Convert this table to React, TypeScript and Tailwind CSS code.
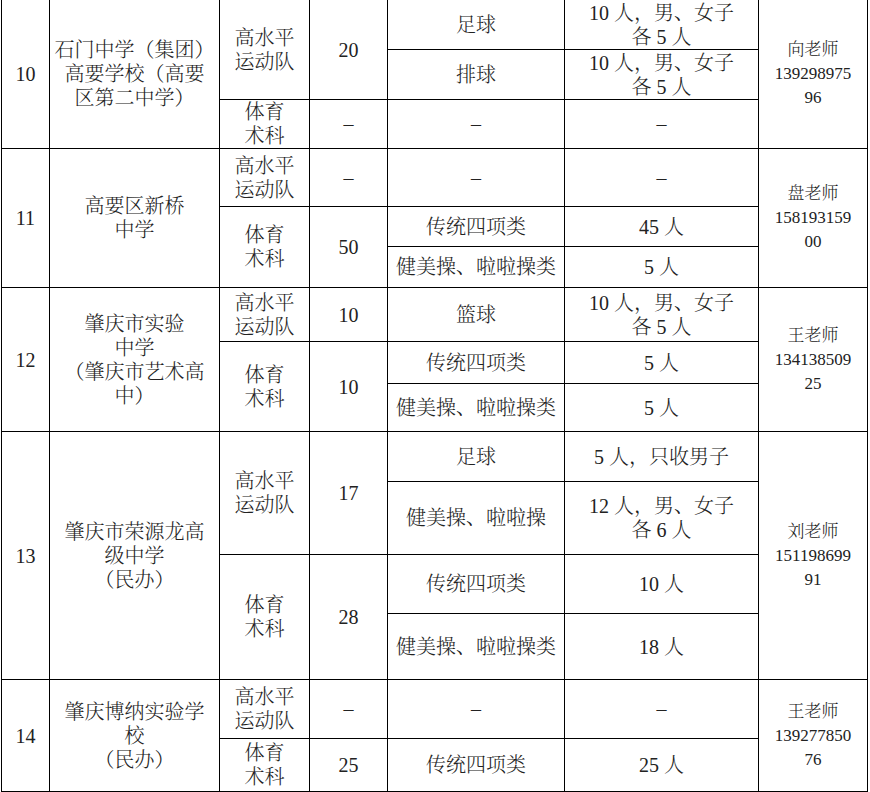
import React from "react";

const base =
  "flex items-center justify-center text-center border-r border-b border-black leading-[24px]";

function C({ cls, children, small }: { cls: string; children: React.ReactNode; small?: boolean }) {
  return <div className={`${base} ${small ? "text-[17px]" : "text-[20px]"} ${cls}`}>{children}</div>;
}

export default function App() {
  return (
    <div className="bg-white w-[870px] h-[792px] overflow-hidden">
      <div className="ml-px w-fit border-l border-black grid grid-cols-[48px_170px_90px_78px_177px_194px_109px] grid-rows-[50px_50px_49px_58px_40px_41px_54px_42px_48px_50px_73px_59px_66px_59px_53px] text-[#222222] font-light font-['Liberation_Serif','Noto_Serif_CJK_SC','Noto_Sans_CJK_SC',serif]">
        {/* Row 10 */}
        <C cls="col-start-1 row-start-1 row-span-3">10</C>
        <C cls="col-start-2 row-start-1 row-span-3">
          <div>石门中学（集团）<br />高要学校（高要<br />区第二中学）</div>
        </C>
        <C cls="col-start-3 row-start-1 row-span-2">
          <div>高水平<br />运动队</div>
        </C>
        <C cls="col-start-4 row-start-1 row-span-2">20</C>
        <C cls="col-start-5 row-start-1">足球</C>
        <C cls="col-start-6 row-start-1">
          <div>10 人，男、女子<br />各 5 人</div>
        </C>
        <C cls="col-start-5 row-start-2">排球</C>
        <C cls="col-start-6 row-start-2">
          <div>10 人，男、女子<br />各 5 人</div>
        </C>
        <C cls="col-start-3 row-start-3">
          <div>体育<br />术科</div>
        </C>
        <C cls="col-start-4 row-start-3">–</C>
        <C cls="col-start-5 row-start-3">–</C>
        <C cls="col-start-6 row-start-3">–</C>
        <C small cls="col-start-7 row-start-1 row-span-3">
          <div>向老师<br />139298975<br />96</div>
        </C>

        {/* Row 11 */}
        <C cls="col-start-1 row-start-4 row-span-3">11</C>
        <C cls="col-start-2 row-start-4 row-span-3">
          <div>高要区新桥<br />中学</div>
        </C>
        <C cls="col-start-3 row-start-4">
          <div>高水平<br />运动队</div>
        </C>
        <C cls="col-start-4 row-start-4">–</C>
        <C cls="col-start-5 row-start-4">–</C>
        <C cls="col-start-6 row-start-4">–</C>
        <C cls="col-start-3 row-start-5 row-span-2">
          <div>体育<br />术科</div>
        </C>
        <C cls="col-start-4 row-start-5 row-span-2">50</C>
        <C cls="col-start-5 row-start-5">传统四项类</C>
        <C cls="col-start-6 row-start-5">45 人</C>
        <C cls="col-start-5 row-start-6">健美操、啦啦操类</C>
        <C cls="col-start-6 row-start-6">5 人</C>
        <C small cls="col-start-7 row-start-4 row-span-3">
          <div>盘老师<br />158193159<br />00</div>
        </C>

        {/* Row 12 */}
        <C cls="col-start-1 row-start-7 row-span-3">12</C>
        <C cls="col-start-2 row-start-7 row-span-3">
          <div>肇庆市实验<br />中学<br />（肇庆市艺术高<br />中）</div>
        </C>
        <C cls="col-start-3 row-start-7">
          <div>高水平<br />运动队</div>
        </C>
        <C cls="col-start-4 row-start-7">10</C>
        <C cls="col-start-5 row-start-7">篮球</C>
        <C cls="col-start-6 row-start-7">
          <div>10 人，男、女子<br />各 5 人</div>
        </C>
        <C cls="col-start-3 row-start-8 row-span-2">
          <div>体育<br />术科</div>
        </C>
        <C cls="col-start-4 row-start-8 row-span-2">10</C>
        <C cls="col-start-5 row-start-8">传统四项类</C>
        <C cls="col-start-6 row-start-8">5 人</C>
        <C cls="col-start-5 row-start-9">健美操、啦啦操类</C>
        <C cls="col-start-6 row-start-9">5 人</C>
        <C small cls="col-start-7 row-start-7 row-span-3">
          <div>王老师<br />134138509<br />25</div>
        </C>

        {/* Row 13 */}
        <C cls="col-start-1 row-start-10 row-span-4">13</C>
        <C cls="col-start-2 row-start-10 row-span-4">
          <div>肇庆市荣源龙高<br />级中学<br />（民办）</div>
        </C>
        <C cls="col-start-3 row-start-10 row-span-2">
          <div>高水平<br />运动队</div>
        </C>
        <C cls="col-start-4 row-start-10 row-span-2">17</C>
        <C cls="col-start-5 row-start-10">足球</C>
        <C cls="col-start-6 row-start-10">5 人，只收男子</C>
        <C cls="col-start-5 row-start-11">健美操、啦啦操</C>
        <C cls="col-start-6 row-start-11">
          <div>12 人，男、女子<br />各 6 人</div>
        </C>
        <C cls="col-start-3 row-start-12 row-span-2">
          <div>体育<br />术科</div>
        </C>
        <C cls="col-start-4 row-start-12 row-span-2">28</C>
        <C cls="col-start-5 row-start-12">传统四项类</C>
        <C cls="col-start-6 row-start-12">10 人</C>
        <C cls="col-start-5 row-start-13">健美操、啦啦操类</C>
        <C cls="col-start-6 row-start-13">18 人</C>
        <C small cls="col-start-7 row-start-10 row-span-4">
          <div>刘老师<br />151198699<br />91</div>
        </C>

        {/* Row 14 */}
        <C cls="col-start-1 row-start-14 row-span-2">14</C>
        <C cls="col-start-2 row-start-14 row-span-2">
          <div>肇庆博纳实验学<br />校<br />（民办）</div>
        </C>
        <C cls="col-start-3 row-start-14">
          <div>高水平<br />运动队</div>
        </C>
        <C cls="col-start-4 row-start-14">–</C>
        <C cls="col-start-5 row-start-14">–</C>
        <C cls="col-start-6 row-start-14">–</C>
        <C cls="col-start-3 row-start-15">
          <div>体育<br />术科</div>
        </C>
        <C cls="col-start-4 row-start-15">25</C>
        <C cls="col-start-5 row-start-15">传统四项类</C>
        <C cls="col-start-6 row-start-15">25 人</C>
        <C small cls="col-start-7 row-start-14 row-span-2">
          <div>王老师<br />139277850<br />76</div>
        </C>
      </div>
    </div>
  );
}
